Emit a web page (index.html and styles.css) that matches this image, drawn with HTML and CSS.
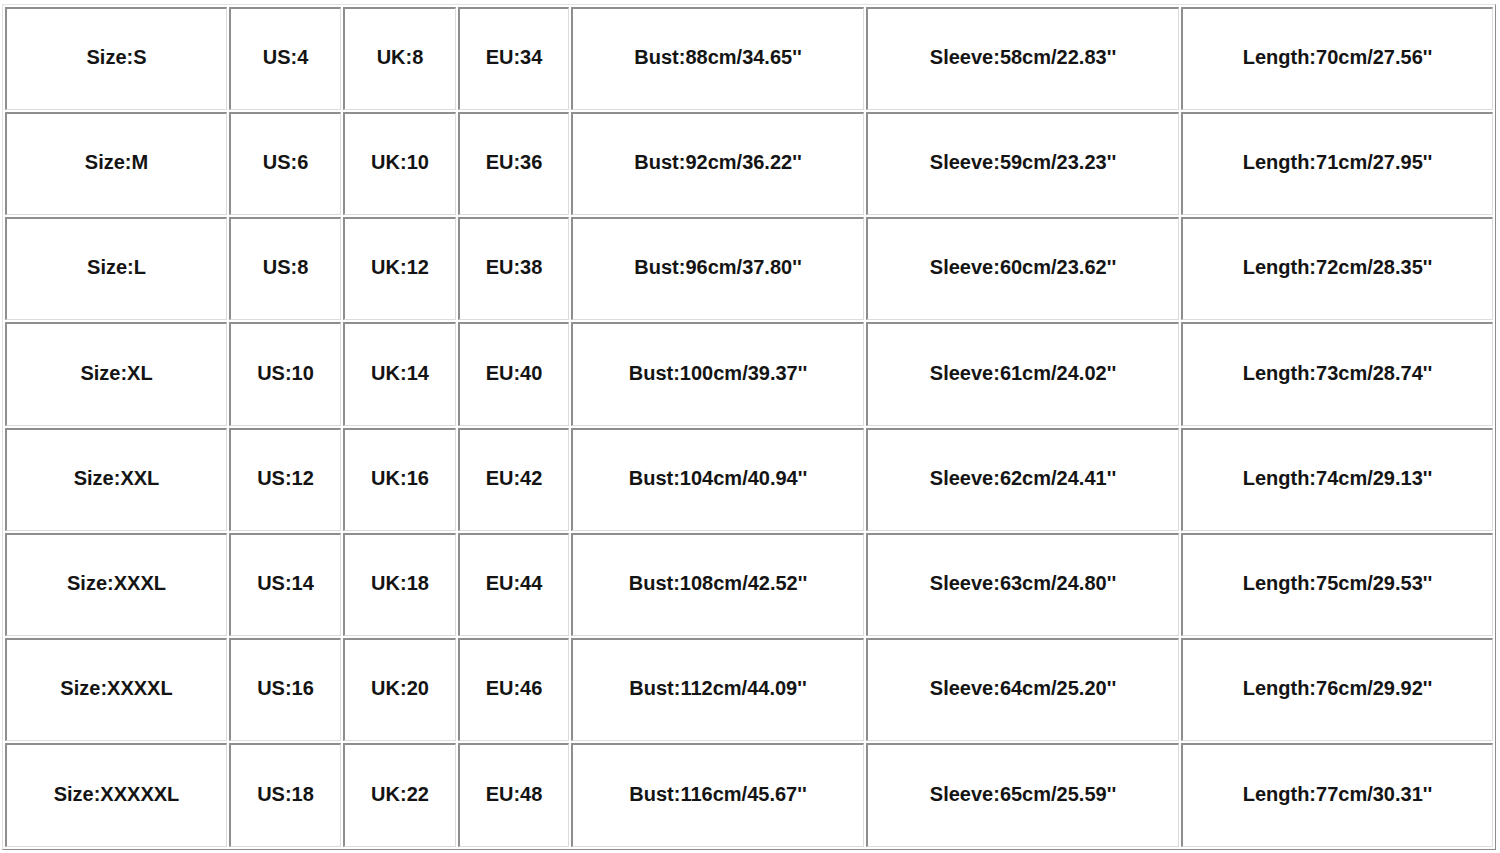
FILE: index.html
```html
<!DOCTYPE html>
<html lang="en">
<head>
<meta charset="utf-8">
<title>Size Chart</title>
<link rel="stylesheet" href="styles.css">
</head>
<body>
<div class="chart" role="table">
  <div class="cell">Size:S</div><div class="cell">US:4</div><div class="cell">UK:8</div><div class="cell">EU:34</div><div class="cell">Bust:88cm/34.65''</div><div class="cell">Sleeve:58cm/22.83''</div><div class="cell">Length:70cm/27.56''</div>
  <div class="cell">Size:M</div><div class="cell">US:6</div><div class="cell">UK:10</div><div class="cell">EU:36</div><div class="cell">Bust:92cm/36.22''</div><div class="cell">Sleeve:59cm/23.23''</div><div class="cell">Length:71cm/27.95''</div>
  <div class="cell">Size:L</div><div class="cell">US:8</div><div class="cell">UK:12</div><div class="cell">EU:38</div><div class="cell">Bust:96cm/37.80''</div><div class="cell">Sleeve:60cm/23.62''</div><div class="cell">Length:72cm/28.35''</div>
  <div class="cell">Size:XL</div><div class="cell">US:10</div><div class="cell">UK:14</div><div class="cell">EU:40</div><div class="cell">Bust:100cm/39.37''</div><div class="cell">Sleeve:61cm/24.02''</div><div class="cell">Length:73cm/28.74''</div>
  <div class="cell">Size:XXL</div><div class="cell">US:12</div><div class="cell">UK:16</div><div class="cell">EU:42</div><div class="cell">Bust:104cm/40.94''</div><div class="cell">Sleeve:62cm/24.41''</div><div class="cell">Length:74cm/29.13''</div>
  <div class="cell">Size:XXXL</div><div class="cell">US:14</div><div class="cell">UK:18</div><div class="cell">EU:44</div><div class="cell">Bust:108cm/42.52''</div><div class="cell">Sleeve:63cm/24.80''</div><div class="cell">Length:75cm/29.53''</div>
  <div class="cell">Size:XXXXL</div><div class="cell">US:16</div><div class="cell">UK:20</div><div class="cell">EU:46</div><div class="cell">Bust:112cm/44.09''</div><div class="cell">Sleeve:64cm/25.20''</div><div class="cell">Length:76cm/29.92''</div>
  <div class="cell">Size:XXXXXL</div><div class="cell">US:18</div><div class="cell">UK:22</div><div class="cell">EU:48</div><div class="cell">Bust:116cm/45.67''</div><div class="cell">Sleeve:65cm/25.59''</div><div class="cell">Length:77cm/30.31''</div>
</div>
</body>
</html>
```

FILE: styles.css
```css
html, body {
  margin: 0;
  padding: 0;
  background: #ffffff;
}

body {
  font-family: "Liberation Sans", Arial, sans-serif;
  overflow: hidden;
}

.chart {
  display: grid;
  grid-template-columns: 222px 112px 113px 111px 293px 313px 312px;
  grid-template-rows: 103px 103px 103px 104px 103px 103px 103px 104px;
  gap: 2px;
  padding: 2px;
  margin: 4px 0 0 2px;
  width: max-content;
  border-style: solid;
  border-width: 1px;
  border-color: #e2e2e2 #8c8c8c #8c8c8c #e2e2e2;
}

.cell {
  box-sizing: border-box;
  display: flex;
  align-items: center;
  justify-content: center;
  border-style: solid;
  border-width: 2px 1px 1px 2px;
  border-color: #8e8e8e #dcdcdc #dcdcdc #8e8e8e;
  font-size: 20px;
  font-weight: bold;
  color: #141414;
  white-space: nowrap;
  padding-bottom: 3px;
}
```
